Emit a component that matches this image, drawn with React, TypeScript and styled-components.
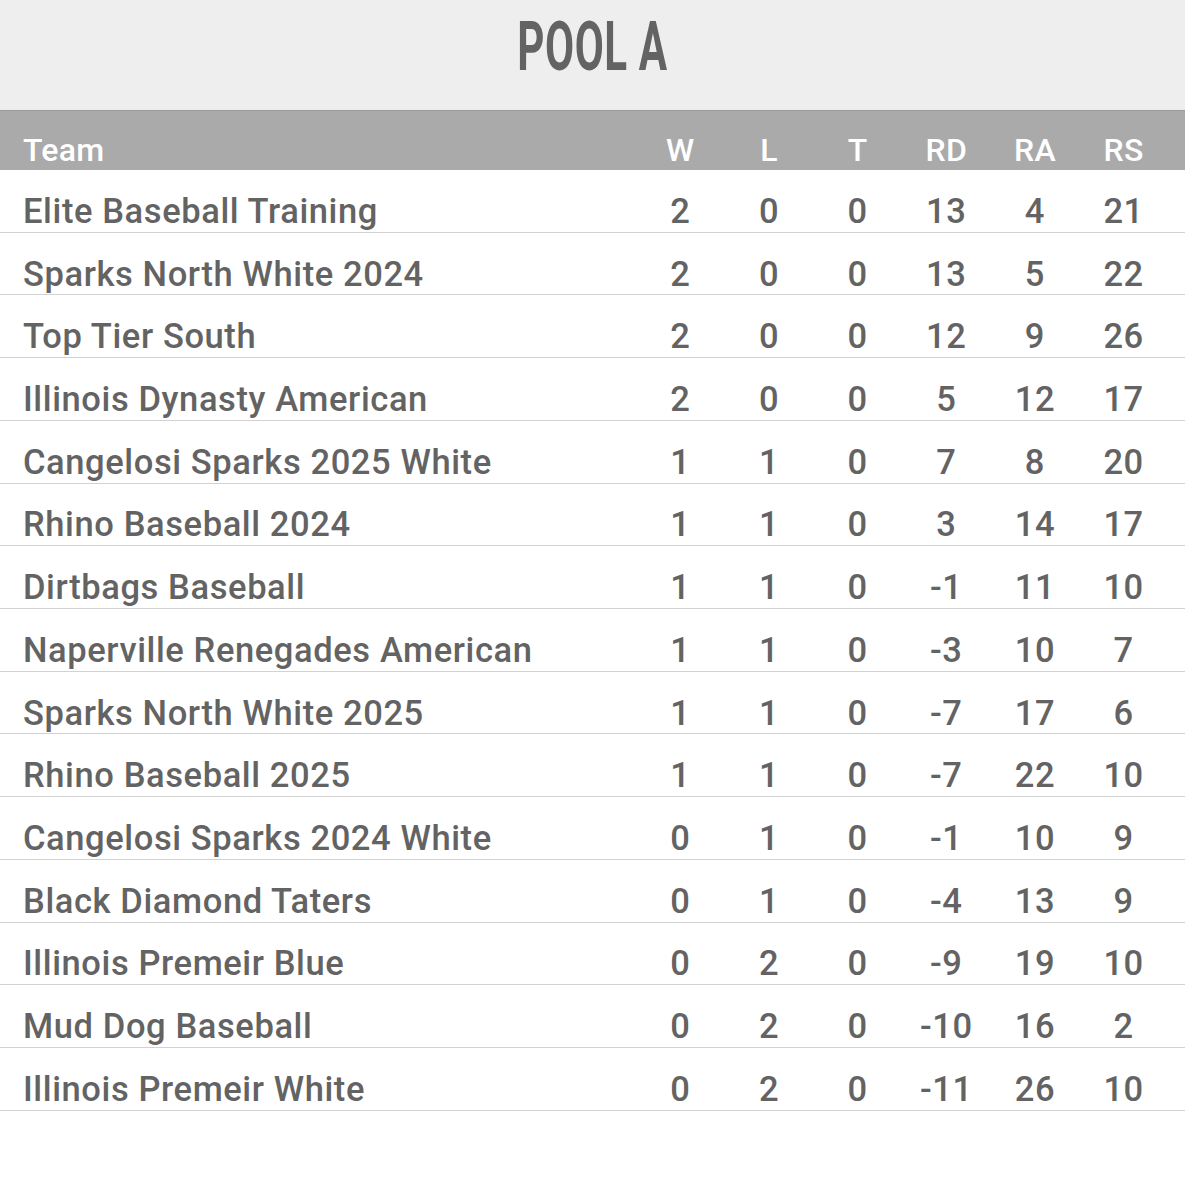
import { FC } from "react";
import styled, { createGlobalStyle } from "styled-components";

type Team = {
  name: string;
  w: number;
  l: number;
  t: number;
  rd: number;
  ra: number;
  rs: number;
};

const teams: Team[] = [
  { name: "Elite Baseball Training", w: 2, l: 0, t: 0, rd: 13, ra: 4, rs: 21 },
  { name: "Sparks North White 2024", w: 2, l: 0, t: 0, rd: 13, ra: 5, rs: 22 },
  { name: "Top Tier South", w: 2, l: 0, t: 0, rd: 12, ra: 9, rs: 26 },
  { name: "Illinois Dynasty American", w: 2, l: 0, t: 0, rd: 5, ra: 12, rs: 17 },
  { name: "Cangelosi Sparks 2025 White", w: 1, l: 1, t: 0, rd: 7, ra: 8, rs: 20 },
  { name: "Rhino Baseball 2024", w: 1, l: 1, t: 0, rd: 3, ra: 14, rs: 17 },
  { name: "Dirtbags Baseball", w: 1, l: 1, t: 0, rd: -1, ra: 11, rs: 10 },
  { name: "Naperville Renegades American", w: 1, l: 1, t: 0, rd: -3, ra: 10, rs: 7 },
  { name: "Sparks North White 2025", w: 1, l: 1, t: 0, rd: -7, ra: 17, rs: 6 },
  { name: "Rhino Baseball 2025", w: 1, l: 1, t: 0, rd: -7, ra: 22, rs: 10 },
  { name: "Cangelosi Sparks 2024 White", w: 0, l: 1, t: 0, rd: -1, ra: 10, rs: 9 },
  { name: "Black Diamond Taters", w: 0, l: 1, t: 0, rd: -4, ra: 13, rs: 9 },
  { name: "Illinois Premeir Blue", w: 0, l: 2, t: 0, rd: -9, ra: 19, rs: 10 },
  { name: "Mud Dog Baseball", w: 0, l: 2, t: 0, rd: -10, ra: 16, rs: 2 },
  { name: "Illinois Premeir White", w: 0, l: 2, t: 0, rd: -11, ra: 26, rs: 10 },
];

const GlobalStyle = createGlobalStyle`
  body {
    margin: 0;
    background: #ffffff;
    font-family: Roboto, "Liberation Sans", sans-serif;
  }
`;

const Page = styled.div`
  width: 1185px;
  min-height: 1200px;
  background: #ffffff;
`;

const TitleBar = styled.div`
  height: 110px;
  background: #eeeeee;
  display: flex;
  justify-content: center;
  align-items: flex-start;
`;

const Title = styled.h1`
  margin: 0;
  margin-top: 7px;
  font-family: Roboto, "Liberation Sans", sans-serif;
  font-weight: 700;
  font-size: 68px;
  line-height: 80px;
  color: #636363;
  transform: scaleX(0.62);
  letter-spacing: 1px;
`;

const Row = styled.div<{ $head?: boolean }>`
  display: grid;
  grid-template-columns: 636px repeat(6, 88.67px);
  height: ${(p) => (p.$head ? "60px" : "62.73px")};
  box-sizing: border-box;
  align-items: center;
  background: ${(p) => (p.$head ? "#aaaaaa" : "#ffffff")};
  color: ${(p) => (p.$head ? "#ffffff" : "#636363")};
  border-top: ${(p) => (p.$head ? "1px solid #9a9a9a" : "none")};
  border-bottom: ${(p) => (p.$head ? "none" : "1px solid #d2d2d2")};
  font-size: ${(p) => (p.$head ? "32px" : "34.5px")};
  font-weight: 500;
  letter-spacing: ${(p) => (p.$head ? "0.3px" : "0.6px")};
  padding-top: ${(p) => (p.$head ? "18px" : "20px")};
`;

const NameCell = styled.div`
  padding-left: 23px;
  white-space: nowrap;
`;

const NumCell = styled.div`
  text-align: center;
`;

const App: FC = () => {
  return (
    <Page>
      <GlobalStyle />
      <TitleBar>
        <Title>POOL A</Title>
      </TitleBar>
      <Row $head>
        <NameCell>Team</NameCell>
        <NumCell>W</NumCell>
        <NumCell>L</NumCell>
        <NumCell>T</NumCell>
        <NumCell>RD</NumCell>
        <NumCell>RA</NumCell>
        <NumCell>RS</NumCell>
      </Row>
      {teams.map((t) => (
        <Row key={t.name}>
          <NameCell>{t.name}</NameCell>
          <NumCell>{t.w}</NumCell>
          <NumCell>{t.l}</NumCell>
          <NumCell>{t.t}</NumCell>
          <NumCell>{t.rd}</NumCell>
          <NumCell>{t.ra}</NumCell>
          <NumCell>{t.rs}</NumCell>
        </Row>
      ))}
    </Page>
  );
};

export default App;
